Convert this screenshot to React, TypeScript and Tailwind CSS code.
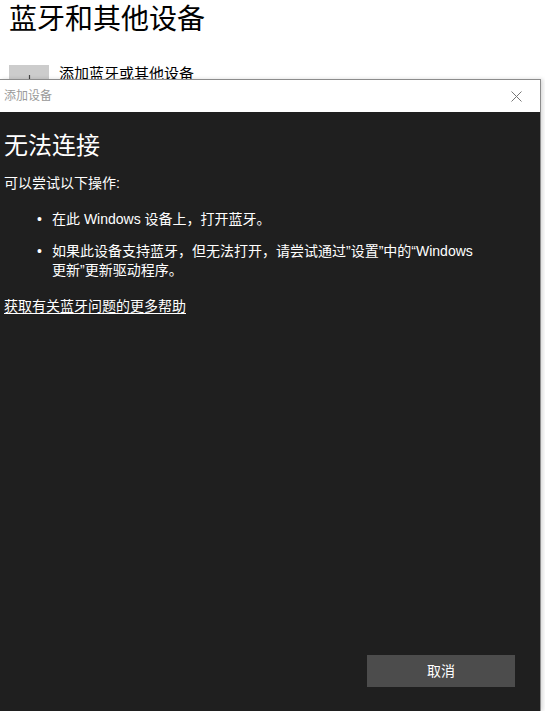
import React from 'react';

const font = 'font-["Liberation_Sans","Noto_Sans_CJK_SC",sans-serif]';

const App: React.FC = () => {
    return (
        <div className={`relative w-[545px] h-[711px] overflow-hidden bg-white ${font}`}>
            {/* 背后的设置页 (被对话框盖住) */}
            <div className="h-[79px] overflow-hidden pl-[9px] pt-[3px]">
                <h1 className="text-[28px] leading-[34px] text-black">蓝牙和其他设备</h1>
                <div className="mt-[28px] flex items-start">
                    <div className="w-[40px] h-[40px] bg-[#cccccc] flex justify-center pt-[10px]">
                        <svg width="9" height="9" viewBox="0 0 9 9" className="text-[#444]">
                            <path d="M4.5 0 V9 M0 4.5 H9" stroke="currentColor" strokeWidth="1.2" fill="none" />
                        </svg>
                    </div>
                    <span className="ml-[10px] -mt-[1px] text-[15px] leading-[20px] text-black">添加蓝牙或其他设备</span>
                </div>
            </div>

            {/* 添加设备 对话框 */}
            <div className="absolute left-0 top-[79px] bottom-0 w-[541px] border-t border-r border-[#8c8c8c] shadow-[2px_0_4px_rgba(0,0,0,0.15)] flex flex-col">
                <div className="h-[32px] bg-white flex items-center justify-between pl-[4px] pr-[18px]">
                    <span className="text-[12px] text-[#999999]">添加设备</span>
                    <svg width="11" height="11" viewBox="0 0 11 11" className="text-[#777]">
                        <path d="M0.5 0.5 L10.5 10.5 M10.5 0.5 L0.5 10.5" stroke="currentColor" strokeWidth="1" fill="none" />
                    </svg>
                </div>
                <div className="flex-1 bg-[#1f1f1f] text-white pl-[4px] flex flex-col">
                    <h2 className="mt-[19px] text-[24px] leading-[30px]">无法连接</h2>
                    <p className="mt-[12px] text-[14px] leading-[20px]">可以尝试以下操作:</p>
                    <ul className="mt-[16px] text-[14px]">
                        <li className="flex leading-[20px]">
                            <span className="w-[48px] pl-[33px]">•</span>
                            <span>在此 Windows 设备上，打开蓝牙。</span>
                        </li>
                        <li className="flex mt-[13px] leading-[19px]">
                            <span className="w-[48px] pl-[33px]">•</span>
                            <span>
                                如果此设备支持蓝牙，但无法打开，请尝试通过”设置”中的“Windows
                                <br />
                                更新”更新驱动程序。
                            </span>
                        </li>
                    </ul>
                    <a className="mt-[16px] text-[14px] leading-[20px] underline underline-offset-2 self-start">
                        获取有关蓝牙问题的更多帮助
                    </a>
                    <div className="mt-auto mb-[24px] flex justify-end pr-[25px]">
                        <button className="w-[148px] h-[32px] bg-[#4c4c4c] text-[14px] text-white">取消</button>
                    </div>
                </div>
            </div>
        </div>
    );
};

export default App;
